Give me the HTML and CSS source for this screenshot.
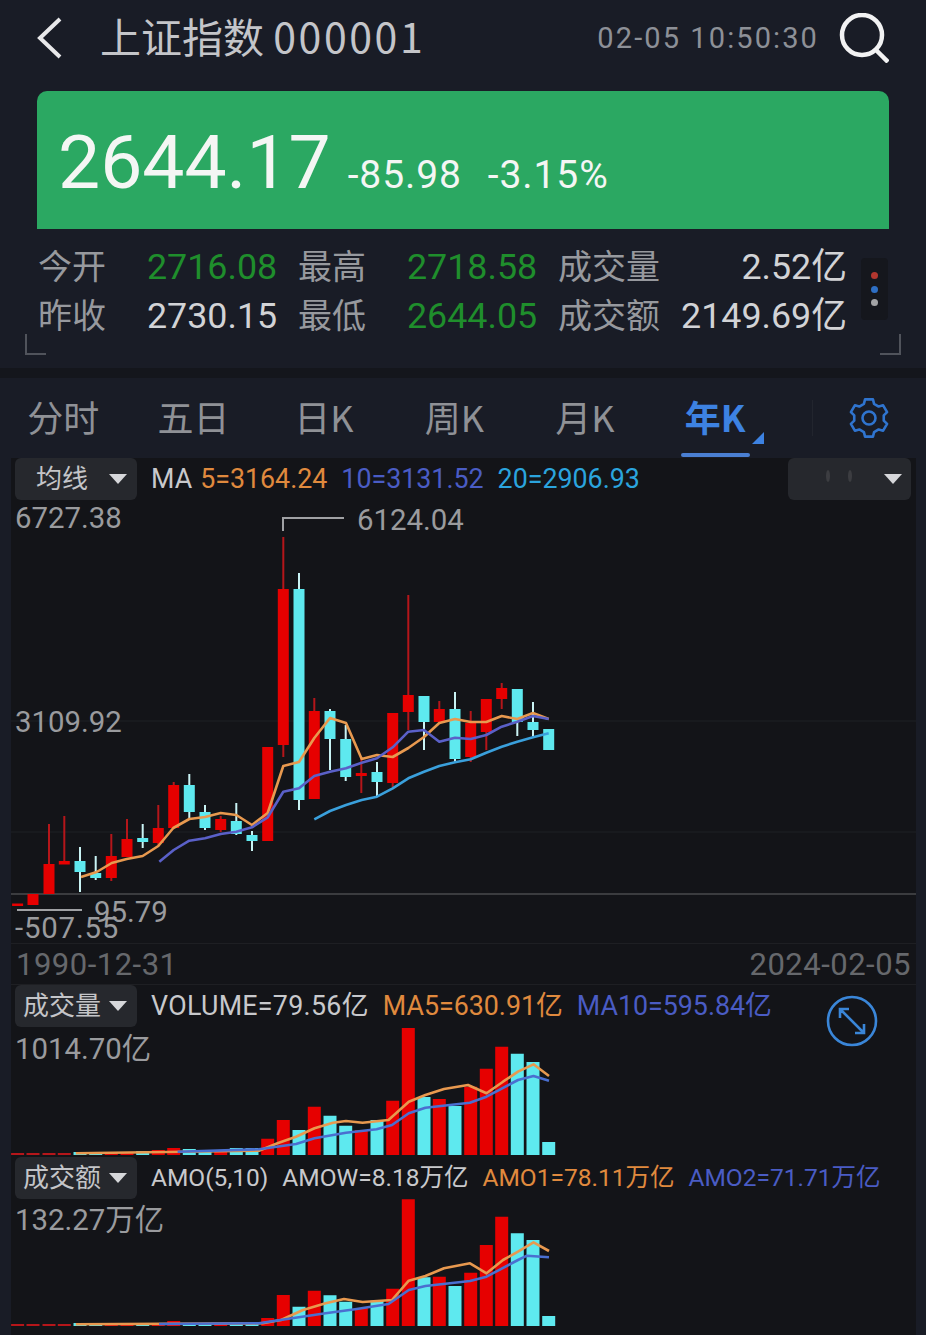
FILE: index.html
```html
<!DOCTYPE html>
<html lang="zh-CN">
<head>
<meta charset="utf-8">
<title>上证指数 000001</title>
<link rel="stylesheet" href="styles.css">
</head>
<body>
<header class="header">
  <svg class="back" viewBox="0 0 26 44"><path d="M24 3 4 22l20 19"/></svg>
  <h1 class="title">上证指数 <span class="code">000001</span></h1>
  <span class="time">02-05 10:50:30</span>
  <svg class="search" viewBox="0 0 50 50"><circle cx="23" cy="22" r="20"/><path d="m37 37 12 12"/></svg>
</header>

<section class="quote">
  <span class="price">2644.17</span>
  <span class="change">-85.98</span>
  <span class="change">-3.15%</span>
</section>

<section class="stats">
  <span class="label">今开</span><span class="value down">2716.08</span>
  <span class="label">最高</span><span class="value down">2718.58</span>
  <span class="label">成交量</span><span class="value end">2.52亿</span>
  <span class="label">昨收</span><span class="value">2730.15</span>
  <span class="label">最低</span><span class="value down">2644.05</span>
  <span class="label">成交额</span><span class="value end">2149.69亿</span>
  <div class="dots"><i class="dot red"></i><i class="dot blue"></i><i class="dot grey"></i></div>
  <i class="corner left"></i><i class="corner right"></i>
</section>

<nav class="tabs">
  <a class="tab">分时</a><a class="tab">五日</a><a class="tab">日K</a><a class="tab">周K</a><a class="tab">月K</a><a class="tab active">年K</a>
  <i class="tab-divider"></i>
  <svg class="gear" viewBox="-21 -21 42 42"><path d="M-5.1-14.1-3.95-18.6H3.95L5.1-14.1 9.66-11.47 14.13-12.72 18.09-5.88 14.76-2.63V2.63L18.09 5.88 14.13 12.72 9.66 11.47 5.1 14.1 3.95 18.6H-3.95L-5.1 14.1-9.66 11.47-14.13 12.72-18.09 5.88-14.76 2.63V-2.63L-18.09-5.88-14.13-12.72-9.66-11.47Z"/><circle r="6.5"/></svg>
</nav>

<main class="chart">
  <div class="legend">
    <button class="select"><span class="select-text">均线</span><i class="caret"></i></button>
    <span class="item tight">MA</span>
    <span class="item orange">5=3164.24</span>
    <span class="item indigo">10=3131.52</span>
    <span class="item sky">20=2906.93</span>
    <button class="select blurred"><svg class="smudge" viewBox="0 0 80 30"><ellipse cx="30" cy="12" rx="2" ry="6"/><ellipse cx="52" cy="12" rx="2" ry="6"/></svg><i class="caret"></i></button>
  </div>

  <svg class="plot main-plot" viewBox="11 500 905 443">
    <path class="grid" d="M11 721H916M11 832H916"/>
    <path class="axis" d="M11 894H916"/>
    <path class="mark" d="M283 531V518H344M17 910H82"/>
    <path class="wick-red" d="M49 824V864M64.3 816V861M111.3 834V881M127 819V839M158.3 805V845M173.7 782V785M220.7 816V832M283.3 537V757M314.3 698V711M361.3 757V793M392.7 783V787M408.3 595V730M439.3 701V709M470.7 711V762M486.3 732V750M501.7 683V709"/>
    <path class="wick-cyan" d="M80 847V892M95.7 856V880M142.7 824V848M189.3 774V818M205 805V830M236.3 803V835M252 831V851M299 573V810M330 709V770M345.7 725V781M377 762V797M424 722V750M455 692V762M517.3 722V736M533 702V736"/>
    <path class="body-red" d="M17.6 903.5V906M33 894V905M49 864V894M64.3 861V864.5M111.3 856V878M127 839V857M158.3 828V843M173.7 785V828M220.7 819V830M267.7 747V841M283.3 589V745M314.3 711V799M361.3 773V776M392.7 713V783M408.3 695V712M439.3 709V722M470.7 723V757M486.3 699V732M501.7 688V699"/>
    <path class="body-cyan" d="M80 861V872M95.7 873V878M142.7 838V842M189.3 785V812M205 812V828M236.3 821V834M252 835V841M299 589V800M330 711V739M345.7 739V777M377 772V782M424 696V722M455 709V759M517.3 689V722M533 722V730M548.7 729V750"/>
    <polyline class="line ln-orange" points="81,877 96.7,872 111.7,863 126.7,859 142.7,856 158.3,846 173.3,828 189.3,819 205,817 220.7,813 236.3,815 252,825 267.7,813 283.3,766 299,762 314.3,738 330,718 346,723 361.7,759 377,755 392.7,757 408.3,748 424,737 439.3,723 455,719 470.7,722 486.3,722 501.7,716 517.3,719 533,713 548.7,719"/>
    <polyline class="line ln-indigo" points="159.3,861.7 173.7,850 189.3,840.7 205,838.3 220.7,834 236.3,831.7 252,827.3 267.7,817.3 283.3,791.7 299,788.3 314.3,776 330,771.7 346,768.3 361.7,762.7 377,758.3 392.7,747.3 408.3,731.7 424,730 439.3,741.7 455,737.7 470.7,739 486.3,735 501.7,726.7 517.3,721.7 533,716 548.7,719"/>
    <polyline class="line ln-sky" points="314.3,819.3 330,811 346,805 361.7,800 377,796.7 392.7,788.3 408.3,778.3 424,771.7 439.3,766 455,762.3 470.7,759.3 486.3,752.7 501.7,746.7 517.3,741.7 533,737.3 548.7,733.3"/>
    <text class="scale" x="15" y="528">6727.38</text>
    <text class="scale" x="357" y="530">6124.04</text>
    <text class="scale" x="15" y="732">3109.92</text>
    <text class="scale" x="94" y="922">95.79</text>
    <text class="scale wide" x="15" y="938">-507.55</text>
  </svg>

  <div class="dates"><span>1990-12-31</span><span>2024-02-05</span></div>

  <div class="legend">
    <button class="select"><span class="select-text">成交量</span><i class="caret"></i></button>
    <span class="item spaced">VOLUME=79.56亿</span>
    <span class="item orange">MA5=630.91亿</span>
    <span class="item indigo">MA10=595.84亿</span>
  </div>

  <svg class="plot vol-plot" viewBox="11 1027 905 130">
    <path class="bar-dash" d="M17.6 1155V1153M33 1155V1153M49 1155V1153M64.3 1155V1153"/>
    <path class="bar-cyan" d="M80 1155V1152M95.7 1155V1152M142.7 1155V1151M189.3 1155V1149M205 1155V1150M236.3 1155V1148M252 1155V1148M299 1155V1130M330 1155V1115.7M345.7 1155V1125.7M377 1155V1120M424 1155V1097M455 1155V1106M517.3 1155V1053.7M533 1155V1062M548.7 1155V1142"/>
    <path class="bar-red" d="M111.3 1155V1152M127 1155V1152M158.3 1155V1150M173.7 1155V1148M220.7 1155V1150M267.7 1155V1138.7M283.3 1155V1120M314.3 1155V1106.7M361.3 1155V1130M392.7 1155V1100.7M408.3 1155V1028M439.3 1155V1099M470.7 1155V1086.7M486.3 1155V1068.7M501.7 1155V1046.7"/>
    <polyline class="line ln-orange" points="75.8,1153.3 259,1150.7 277.5,1143.3 296,1136.7 314.5,1128.3 333,1122.7 346,1121 362.6,1122.7 388.5,1120 408.8,1101.7 425.4,1095 444,1089 468,1085 486.5,1093.3 503,1081.7 518,1071.7 533.5,1064.3 549,1076"/>
    <polyline class="line ln-royal" points="177.6,1151.7 259,1149.3 296,1144 314.5,1138.3 346,1132.7 376.6,1129.3 392,1125 408.8,1113.3 425.4,1107.7 469.8,1102.7 486.5,1096.7 518,1080 533.5,1076 549,1080.7"/>
    <text class="scale" x="15" y="1059">1014.70亿</text>
    <g class="expand"><circle cx="852" cy="1021" r="24"/><path d="M840 1009 864 1033M840 1018V1009H849M855 1033H864V1024"/></g>
  </svg>

  <div class="legend small">
    <button class="select"><span class="select-text">成交额</span><i class="caret"></i></button>
    <span class="item">AMO(5,10)</span>
    <span class="item">AMOW=8.18万亿</span>
    <span class="item orange">AMO1=78.11万亿</span>
    <span class="item indigo">AMO2=71.71万亿</span>
  </div>

  <svg class="plot amo-plot" viewBox="11 1199 905 136">
    <path class="bar-dash" d="M17.6 1326V1324M33 1326V1324M49 1326V1324M64.3 1326V1324"/>
    <path class="bar-cyan" d="M80 1326V1323M95.7 1326V1323M142.7 1326V1323M189.3 1326V1323M205 1326V1323M236.3 1326V1322M252 1326V1322M299 1326V1306.7M330 1326V1295.3M345.7 1326V1301.7M377 1326V1300.7M424 1326V1277.3M455 1326V1286M517.3 1326V1233.3M533 1326V1240M548.7 1326V1316"/>
    <path class="bar-red" d="M111.3 1326V1323M127 1326V1323M158.3 1326V1323M173.7 1326V1321M220.7 1326V1323M267.7 1326V1318M283.3 1326V1295M314.3 1326V1290.7M361.3 1326V1308M392.7 1326V1288.7M408.3 1326V1199.3M439.3 1326V1276.7M470.7 1326V1272.7M486.3 1326V1245M501.7 1326V1216.7"/>
    <polyline class="line ln-orange" points="75.8,1324.3 262.7,1323.3 281,1320 303,1310 325.6,1303.3 344,1299 362.6,1302 392,1300 408.8,1280.7 425.4,1276 444,1268.3 470,1263.3 486.5,1273.3 503,1260 518,1251.7 533.5,1242.3 549,1251"/>
    <polyline class="line ln-royal" points="159,1324 259,1323.3 292,1318.3 325.6,1313.3 355,1309.3 388.5,1304 408.8,1290 425.4,1286 470,1281 486.5,1276.7 518,1260 527,1255.7 549,1257.3"/>
    <text class="scale" x="15" y="1230">132.27万亿</text>
  </svg>
</main>
</body>
</html>
```
FILE: styles.css
```css
* { box-sizing: border-box; }
html, body { margin: 0; height: 1335px; overflow: hidden; }
body {
  background: #191c26;
  font-family: Roboto, "Noto Sans CJK SC", sans-serif;
  color: #c9cacd;
}

.header { display: flex; align-items: center; height: 76px; padding: 0 37px; }
.back { width: 26px; height: 44px; margin-left: -1px; fill: none; stroke: #e8e8ea; stroke-width: 4; }
.title { margin: 0 0 6px 38px; font-size: 41px; font-weight: 400; line-height: 50px; color: #c4c5c9; white-space: nowrap; font-family: "Noto Sans CJK SC", sans-serif; }
.code { letter-spacing: 2.6px; }
.time { margin-left: auto; font-size: 29px; color: #8d9097; letter-spacing: 2.1px; }
.search { width: 50px; height: 50px; margin-left: 20px; fill: none; stroke: #f2f2f3; stroke-width: 4.5; }

.quote {
  display: flex; align-items: baseline; gap: 26px;
  height: 138px; margin: 15px 37px 0; padding: 33px 0 0 21px;
  background: #2ba862; border-radius: 10px 10px 0 0;
  color: #f4f6f4; line-height: 76px;
}
.price { font-size: 75px; margin-right: -9px; }
.change { font-size: 39px; letter-spacing: .9px; }

.stats {
  position: relative;
  display: grid;
  grid-template-columns: 110px 150px 110px 150px 123px 167px;
  grid-auto-rows: 49px; align-items: center;
  height: 139px; padding: 13px 0 0 37px;
}
.label { font-size: 34px; line-height: 40px; color: #97999e; white-space: nowrap; padding-left: 1px; }
.value { font-size: 35.8px; line-height: 40px; color: #d2d3d6; white-space: nowrap; }
.value.down { color: #1f8e2c; }
.value.end { text-align: right; }
.dots {
  position: absolute; left: 861px; top: 29px; width: 27px; height: 62px;
  display: flex; flex-direction: column; align-items: center; justify-content: space-evenly;
  background: #15171d; border-radius: 4px; padding: 8px 0;
}
.dot { width: 7px; height: 7px; border-radius: 50%; }
.dot.red { background: #b2372f; }
.dot.blue { background: #2e6fc4; }
.dot.grey { background: #a3a4a6; }
.corner { position: absolute; top: 105px; width: 21px; height: 21px; border-bottom: 2px solid #50535b; }
.corner.left { left: 25px; border-left: 2px solid #50535b; }
.corner.right { left: 880px; border-right: 2px solid #50535b; }

.tabs {
  position: relative;
  display: grid; grid-template-columns: repeat(6, 130.4px);
  align-items: center; height: 90px; padding-left: 0;
  border-top: 10px solid #14161c;
}
.tab { position: relative; left: -2px; text-align: center; font-size: 36px; color: #8f9196; font-family: "Noto Sans CJK SC", Roboto, sans-serif; line-height: 76px; height: 80px; }
.tab.active { color: #3d82e2; font-weight: 700; }
.tab.active::after {
  content: ""; position: absolute; left: 31px; bottom: 1px; width: 69px; height: 4px;
  background: #4a7fd2; border-radius: 2px;
}
.tab.active::before {
  content: ""; position: absolute; left: 102px; top: 54px; width: 0; height: 0;
  border-left: 12px solid transparent; border-bottom: 12px solid #3d82e2;
}
.tab-divider { position: absolute; left: 812px; top: 22px; width: 1px; height: 36px; background: #22252e; }
.gear {
  position: absolute; left: 848px; top: 19px; width: 42px; height: 42px;
  fill: none; stroke: #2f74cf; stroke-width: 2.6; stroke-linejoin: round;
}

.chart { margin: 0 10px 0 11px; height: 877px; background: #131418; }
.legend { display: flex; align-items: center; gap: 14px; height: 42px; padding-left: 4px; font-size: 26.8px; white-space: nowrap; }
.legend.small { font-size: 24.5px; }
.select {
  flex: none; display: flex; align-items: center; padding: 0 10px 0 0;
  width: 122px; height: 42px;
  background: #26282d; border: 0; border-radius: 6px;
  color: #c4c5c8; font-size: 26px; font-family: "Noto Sans CJK SC", sans-serif;
}
.select-text { width: 94px; text-align: center; line-height: 36px; padding-bottom: 4px; }
.caret { flex: none; width: 0; height: 0; border: 9px solid transparent; border-top: 10px solid #d6d7da; border-bottom: 0; }
.blurred { width: 123px; margin-left: auto; margin-right: 5px; justify-content: flex-end; padding-right: 9px; }
.smudge { flex: none; width: 80px; height: 30px; margin-right: 6px; fill: #3c3d41; }
.item { color: #c8c9cc; line-height: 34px; }
.item.tight { margin-right: -6px; }
.item.spaced { letter-spacing: .3px; }
.item.orange { color: #e08a3e; }
.item.indigo { color: #4a5cc4; }
.item.sky { color: #2ba4de; }

.plot { display: block; width: 905px; overflow: visible; font-family: Roboto, "Noto Sans CJK SC", sans-serif; }
.main-plot { height: 443px; }
.vol-plot { height: 130px; }
.amo-plot { height: 136px; }
.grid { stroke: #1f2024; stroke-width: 1; fill: none; }
.axis { stroke: #3b3c3f; stroke-width: 2; fill: none; }
.mark { stroke: #a0a1a4; stroke-width: 2; fill: none; }
.wick-red { stroke: #b5161a; stroke-width: 2; fill: none; }
.wick-cyan { stroke: #c9f3f4; stroke-width: 2; fill: none; }
.body-red { stroke: #e60000; stroke-width: 11; fill: none; }
.body-cyan { stroke: #5ee9ef; stroke-width: 11; fill: none; }
.bar-red { stroke: #e60000; stroke-width: 13; fill: none; }
.bar-cyan { stroke: #5ee9ef; stroke-width: 13; fill: none; }
.bar-dash { stroke: #b5161a; stroke-width: 13; fill: none; }
.line { fill: none; stroke-width: 2.6; stroke-linejoin: round; }
.ln-orange { stroke: #e8994f; }
.ln-indigo { stroke: #5a60c8; }
.ln-royal { stroke: #4a6fd0; }
.ln-sky { stroke: #3aa0dc; }
.scale { font-size: 29.4px; fill: #9a9b9e; }
.scale.wide { letter-spacing: .8px; }
.expand { fill: none; stroke: #3a86d8; stroke-width: 2.6; }

.dates {
  display: flex; justify-content: space-between; align-items: center;
  height: 42px; padding: 0 5px;
  font-size: 31px; letter-spacing: .5px; color: #66686c;
  border-top: 1px solid #1e1f23; border-bottom: 1px solid #1e1f23;
}
```
